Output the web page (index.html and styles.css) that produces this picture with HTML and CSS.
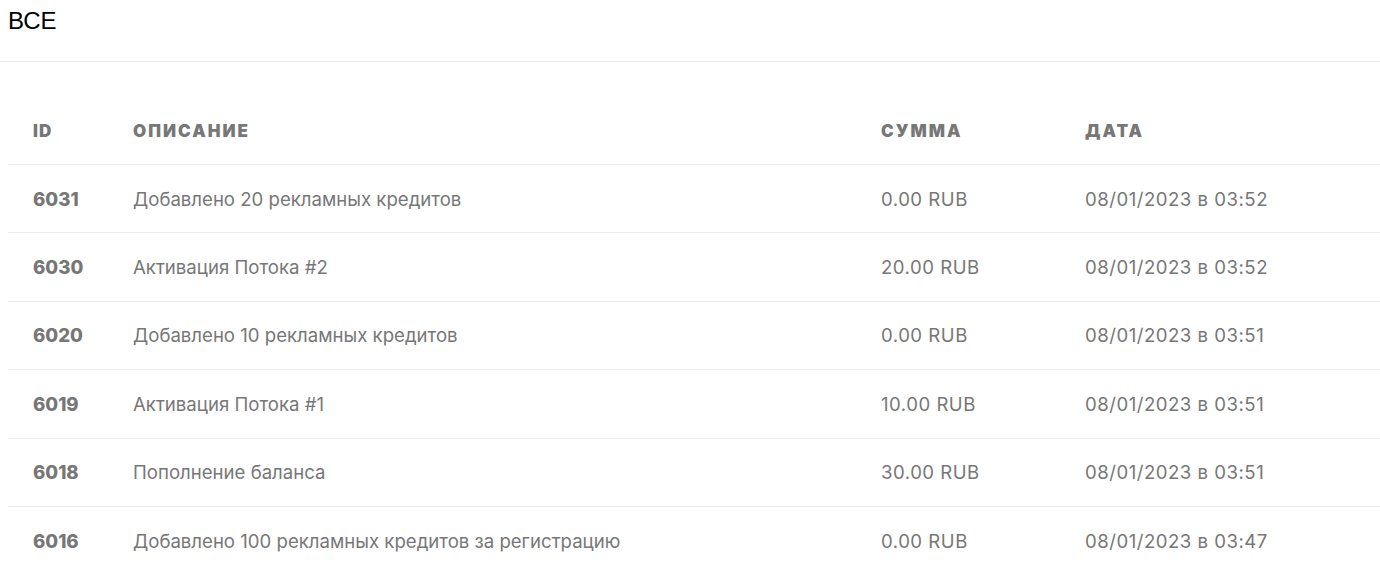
FILE: index.html
```html
<!DOCTYPE html>
<html lang="ru">
<head>
<meta charset="utf-8">
<link rel="stylesheet" href="styles.css">
</head>
<body>
<div class="tab-title">ВСЕ</div>
<div class="divider"></div>
<table class="tx">
  <thead>
    <tr><th class="c-id">ID</th><th class="c-desc">Описание</th><th class="c-sum">Сумма</th><th class="c-date">Дата</th></tr>
  </thead>
  <tbody>
    <tr><td class="c-id">6031</td><td>Добавлено 20 рекламных кредитов</td><td class="num">0.00 RUB</td><td class="num">08/01/2023 в 03:52</td></tr>
    <tr><td class="c-id">6030</td><td>Активация Потока #2</td><td class="num">20.00 RUB</td><td class="num">08/01/2023 в 03:52</td></tr>
    <tr><td class="c-id">6020</td><td>Добавлено 10 рекламных кредитов</td><td class="num">0.00 RUB</td><td class="num">08/01/2023 в 03:51</td></tr>
    <tr><td class="c-id">6019</td><td>Активация Потока #1</td><td class="num">10.00 RUB</td><td class="num">08/01/2023 в 03:51</td></tr>
    <tr><td class="c-id">6018</td><td>Пополнение баланса</td><td class="num">30.00 RUB</td><td class="num">08/01/2023 в 03:51</td></tr>
    <tr><td class="c-id">6016</td><td>Добавлено 100 рекламных кредитов за регистрацию</td><td class="num">0.00 RUB</td><td class="num">08/01/2023 в 03:47</td></tr>
  </tbody>
</table>
</body>
</html>
```
FILE: styles.css
```css
html, body { margin: 0; padding: 0; background: #fff; overflow: hidden; }
body { padding: 0 0 0 8px; }
.tab-title {
  font-family: "Liberation Sans", Arial, sans-serif;
  font-size: 24px;
  line-height: 28px;
  color: #000;
  padding-top: 7px;
}
.divider {
  margin: 26px 0 0 -8px;
  border-top: 1px solid #eeeeee;
}
.tx {
  width: calc(100% + 8px);
  border-collapse: collapse;
  margin-top: 34px;
  font-family: Inter, "Noto Sans", sans-serif;
  color: #777777;
  table-layout: fixed;
}
.tx th {
  text-align: left;
  font-weight: 900;
  font-size: 17px;
  letter-spacing: 2px;
  text-transform: uppercase;
  color: #777777;
  height: 66px;
  padding: 2px 0 0 0;
  vertical-align: middle;
}
.tx td {
  font-size: 18.6px;
  font-weight: 400;
  height: 67.4px;
  padding: 0;
  border-top: 1px solid #eeeeee;
  vertical-align: middle;
  white-space: nowrap;
}
.tx td.num { letter-spacing: 0.5px; }
.tx .c-id { width: 125px; padding-left: 25px; box-sizing: border-box; }
.tx th.c-id { letter-spacing: 1px; }
.tx td.c-id { font-weight: 800; font-size: 18.6px; letter-spacing: 0; }
.tx .c-desc { width: 748px; }
.tx .c-sum { width: 204px; }
```
